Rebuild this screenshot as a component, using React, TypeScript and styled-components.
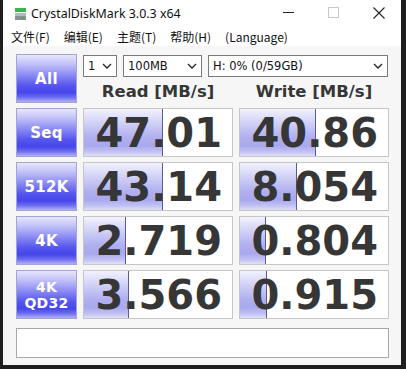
import React from 'react';
import styled, { createGlobalStyle } from 'styled-components';

type Result = {
    label: string[];
    read: string;
    readPct: number;
    write: string;
    writePct: number;
}

const results: Result[] = [
    { label: ['Seq'], read: '47.01', readPct: 53, write: '40.86', writePct: 51 },
    { label: ['512K'], read: '43.14', readPct: 53, write: '8.054', writePct: 38 },
    { label: ['4K'], read: '2.719', readPct: 28, write: '0.804', writePct: 17 },
    { label: ['4K', 'QD32'], read: '3.566', readPct: 30, write: '0.915', writePct: 18 },
];

const menus = ['文件(F)', '编辑(E)', '主题(T)', '帮助(H)', '(Language)'];

const Chevron = () => (
    <svg width="10" height="6" viewBox="0 0 10 6">
        <path d="M1 1 L5 5 L9 1" fill="none" stroke="#222" strokeWidth="1.3" />
    </svg>
)

const DriveIcon = () => (
    <svg width="11" height="12" viewBox="0 0 11 12">
        <rect x="0" y="0" width="11" height="4" fill="#3cb44a" />
        <rect x="0" y="5" width="11" height="7" fill="#8c9094" />
        <rect x="0" y="5" width="11" height="3" fill="#b4b8bc" />
        <rect x="7" y="9" width="2" height="2" fill="#3cb44a" />
    </svg>
)

const App: React.FunctionComponent = () => {
    return (
        <>
            <GlobalStyle />
            <Window>
                <TitleBar>
                    <DriveIcon />
                    <Title>CrystalDiskMark 3.0.3 x64</Title>
                    <Controls>
                        <Control>
                            <svg width="11" height="11" viewBox="0 0 11 11">
                                <line x1="0" y1="5.5" x2="11" y2="5.5" stroke="#222" strokeWidth="1" />
                            </svg>
                        </Control>
                        <Control>
                            <svg width="11" height="11" viewBox="0 0 11 11">
                                <rect x="0.5" y="0.5" width="10" height="10" fill="none" stroke="#c8c8c8" strokeWidth="1" />
                            </svg>
                        </Control>
                        <Control>
                            <svg width="12" height="12" viewBox="0 0 12 12">
                                <path d="M0.5 0.5 L11.5 11.5 M11.5 0.5 L0.5 11.5" stroke="#222" strokeWidth="1.1" />
                            </svg>
                        </Control>
                    </Controls>
                </TitleBar>
                <MenuBar>
                    {menus.map((m) => <MenuItem key={m}>{m}</MenuItem>)}
                </MenuBar>
                <Content>
                    <Grid>
                        <LabelButton>All</LabelButton>
                        <TopPanel>
                            <Selects>
                                <FakeSelect $width={34}><span>1</span><Chevron /></FakeSelect>
                                <FakeSelect $width={79}><span>100MB</span><Chevron /></FakeSelect>
                                <FakeSelect $width={180}><span>H: 0% (0/59GB)</span><Chevron /></FakeSelect>
                            </Selects>
                            <Headers>
                                <Header>Read [MB/s]</Header>
                                <Header>Write [MB/s]</Header>
                            </Headers>
                        </TopPanel>
                        {results.map((r) => (
                            <React.Fragment key={r.label.join(' ')}>
                                <LabelButton $small={r.label.length > 1}>
                                    {r.label.map((l) => <div key={l}>{l}</div>)}
                                </LabelButton>
                                <ValueCell $pct={r.readPct}>{r.read}</ValueCell>
                                <ValueCell $pct={r.writePct}>{r.write}</ValueCell>
                            </React.Fragment>
                        ))}
                    </Grid>
                    <CommentBox />
                </Content>
            </Window>
        </>
    )
}

const GlobalStyle = createGlobalStyle`
    html, body {
        margin: 0;
        padding: 0;
        background: #1e1e1e;
    }
`

const Window = styled.div`
    margin-left: 3px;
    width: 398px;
    height: 365px;
    background: #f6f6f6;
    display: flex;
    flex-direction: column;
    overflow: hidden;
`

const TitleBar = styled.div`
    height: 27px;
    background: #fff;
    display: flex;
    align-items: center;
    padding-left: 12px;
    gap: 5px;
`

const Title = styled.div`
    font-family: "Noto Sans", "Open Sans", sans-serif;
    font-size: 12.4px;
    color: #111;
    margin-top: -1px;
`

const Controls = styled.div`
    margin-left: auto;
    display: flex;
    align-self: stretch;
`

const Control = styled.div`
    width: 45px;
    display: flex;
    align-items: center;
    justify-content: center;
    margin-top: -2px;
`

const MenuBar = styled.div`
    height: 19px;
    background: #fff;
    display: flex;
    align-items: center;
    padding-left: 7px;
    gap: 12px;
`

const MenuItem = styled.div`
    font-family: "Noto Sans CJK SC", "Noto Sans", sans-serif;
    font-size: 12px;
    color: #111;
    padding: 0 1px;
`

const Content = styled.div`
    padding: 8px 0 0 13px;
    display: flex;
    flex-direction: column;
    gap: 9px;
`

const Grid = styled.div`
    display: grid;
    grid-template-columns: 61px 150px 150px;
    grid-auto-rows: 49px;
    column-gap: 6px;
    row-gap: 5px;
`

const LabelButton = styled.div<{ $small?: boolean }>`
    box-sizing: border-box;
    border: 1px solid #a4a4d4;
    background: linear-gradient(to bottom, #e6e6fc 0%, #c4c4f8 18%, #8c8cf4 42%, #5454ee 66%, #4646ea 80%, #6c6cf0 90%, #b0b0f6 100%);
    color: #fff;
    font-family: "DejaVu Sans", Verdana, sans-serif;
    font-weight: bold;
    font-size: ${(p) => p.$small ? '14px' : '15px'};
    line-height: ${(p) => p.$small ? '16px' : '18px'};
    display: flex;
    flex-direction: column;
    align-items: center;
    justify-content: center;
    text-align: center;
    letter-spacing: 0.3px;
`

const TopPanel = styled.div`
    grid-column: 2 / 4;
    display: flex;
    flex-direction: column;
    padding-top: 1px;
    gap: 4px;
`

const Selects = styled.div`
    display: flex;
    gap: 6px;
`

const FakeSelect = styled.div<{ $width: number }>`
    box-sizing: border-box;
    width: ${(p) => p.$width}px;
    height: 22px;
    border: 1px solid #7a7a7a;
    background: #fff;
    display: flex;
    align-items: center;
    justify-content: space-between;
    padding: 0 4px 0 4px;
    font-family: "DejaVu Sans", Verdana, sans-serif;
    font-size: 11.5px;
    color: #111;
`

const Headers = styled.div`
    display: grid;
    grid-template-columns: 150px 150px;
    column-gap: 6px;
`

const Header = styled.div`
    text-align: center;
    font-family: "DejaVu Sans", Verdana, sans-serif;
    font-weight: bold;
    font-size: 16.5px;
    color: #363636;
    line-height: 22px;
`

const ValueCell = styled.div<{ $pct: number }>`
    box-sizing: border-box;
    border: 1px solid #c6c6c6;
    background:
        linear-gradient(#5a5a96, #5a5a96) no-repeat ${(p) => p.$pct}% 0 / 1px 100%,
        linear-gradient(to bottom, #f2f2fe 0%, #d6d6f8 25%, #b0b0f0 60%, #a8a8ee 78%, #c4c4f4 92%, #e0e0fa 100%) no-repeat 0 0 / ${(p) => p.$pct}% 100%,
        #fff;
    display: flex;
    align-items: center;
    justify-content: flex-end;
    padding-right: 10px;
    font-family: "DejaVu Sans", Verdana, sans-serif;
    font-weight: bold;
    font-size: 40px;
    color: #363636;
`

const CommentBox = styled.div`
    box-sizing: border-box;
    width: 373px;
    height: 30px;
    border: 1px solid #a8a8a8;
    background: #fff;
`

export default App;
